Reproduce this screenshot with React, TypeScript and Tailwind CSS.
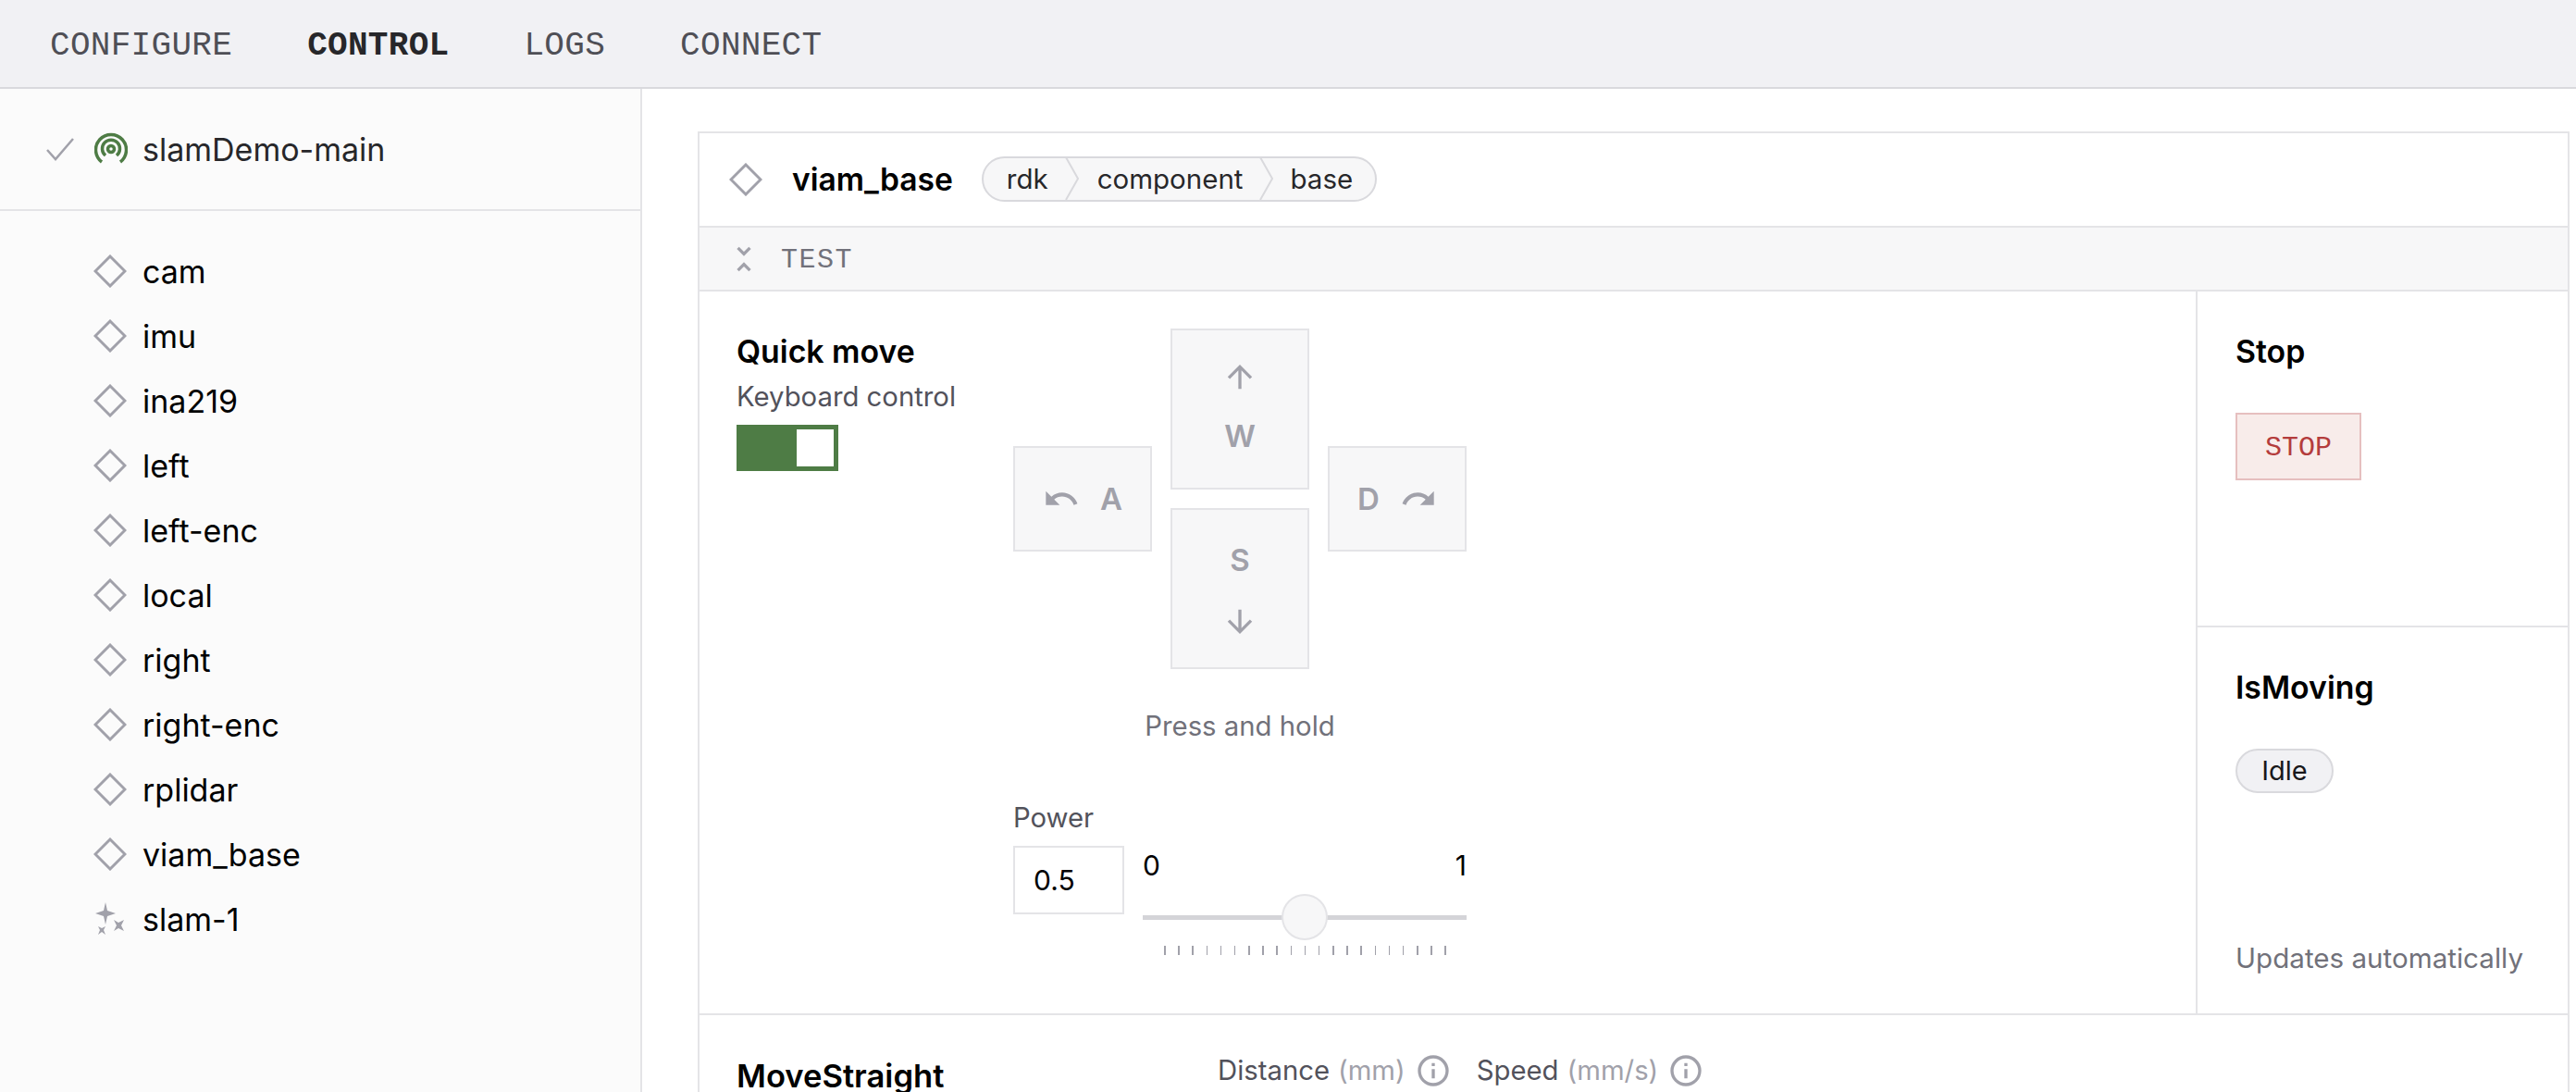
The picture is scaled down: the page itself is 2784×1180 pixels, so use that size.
const SANS = 'font-["Inter","Liberation_Sans",sans-serif]';

const machineParts = ['cam', 'imu', 'ina219', 'left', 'left-enc', 'local', 'right', 'right-enc', 'rplidar', 'viam_base'];

const Mdi = ({ d, size = 40, className = '' }: { d: string; size?: number; className?: string }) => (
  <svg width={size} height={size} viewBox="0 0 24 24" fill="currentColor" className={className}>
    <path d={d} />
  </svg>
);

const UNDO = 'M12.5,8C9.85,8 7.45,9 5.6,10.6L2,7V16H11L7.38,12.38C8.77,11.22 10.54,10.5 12.5,10.5C16.04,10.5 19.05,12.81 20.1,16L22.47,15.22C21.08,11.03 17.15,8 12.5,8Z';
const REDO = 'M18.4,10.6C16.55,9 14.15,8 11.5,8C6.85,8 2.92,11.03 1.54,15.22L3.9,16C4.95,12.81 7.95,10.5 11.5,10.5C13.45,10.5 15.23,11.22 16.62,12.38L13,16H22V7L18.4,10.6Z';
const ARROW_UP = 'M13,20H11V8L5.5,13.5L4.08,12.08L12,4.16L19.92,12.08L18.5,13.5L13,8V20Z';
const ARROW_DOWN = 'M11,4H13V16L18.5,10.5L19.92,11.92L12,19.84L4.08,11.92L5.5,10.5L11,16V4Z';
const UNFOLD_LESS = 'M16.59,5.41L15.17,4L12,7.17L8.83,4L7.41,5.41L12,10M7.41,18.59L8.83,20L12,16.83L15.17,20L16.59,18.59L12,14L7.41,18.59Z';
const INFO = 'M11,9H13V7H11M12,20C7.59,20 4,16.41 4,12C4,7.59 7.59,4 12,4C16.41,4 20,7.59 20,12C20,16.41 16.41,20 12,20M12,2A10,10 0 0,0 2,12A10,10 0 0,0 12,22A10,10 0 0,0 22,12A10,10 0 0,0 12,2M11,17H13V11H11V17Z';

const Diamond = () => (
  <svg width="36" height="36" viewBox="0 0 36 36" fill="none" stroke="#a1a1aa" strokeWidth="3" className="shrink-0">
    <path d="M18 2 L34 18 L18 34 L2 18 Z" />
  </svg>
);

const SlamIcon = () => (
  <svg width="36" height="36" viewBox="0 0 36 36" fill="#a1a1aa" className="shrink-0">
    <path d="M13 0 L15 9 L24 12 L15 15 L13 24 L11 15 L2 12 L11 9 Z" />
    <path d="M22 19 L27 22 L33 19 L30 25 L33 31 L27 28 L22 31 L25 25 Z" />
    <path d="M5 26 L9 28 L13 26 L11 30 L13 35 L9 32 L5 35 L7 30 Z" />
  </svg>
);

const LiveIcon = () => (
  <svg width="36" height="36" viewBox="0 0 36 36" fill="none" stroke="#4e7c45" strokeWidth="3.5" className="shrink-0">
    <path d="M8 32 A16.5 16.5 0 1 1 28 32" />
    <path d="M12 25 A9.5 9.5 0 1 1 24 25" />
    <circle cx="18" cy="18" r="3.5" />
  </svg>
);

const MoveKey = ({ className = '', children }: { className?: string; children: React.ReactNode }) => (
  <div className={`flex w-[150px] items-center justify-center border-2 border-[#e4e4e7] bg-[#f7f7f8] text-[#a1a1aa] ${className}`}>
    {children}
  </div>
);

const KeyLetter = ({ children }: { children: string }) => (
  <span className="text-[33px] leading-none font-semibold">{children}</span>
);

export default function App() {
  return (
    <div className={`flex h-[1180px] w-[2784px] flex-col overflow-hidden bg-white text-black ${SANS}`}>
      {/* tabs */}
      <nav className='flex h-[96px] shrink-0 items-center gap-[81px] border-b-2 border-[#d9d9dd] bg-[#f1f1f4] pt-[5px] pl-[54px] font-["Liberation_Mono",monospace] text-[36px] tracking-[0.3px] text-[#4f4f56]'>
        <span>CONFIGURE</span>
        <span className="font-bold text-[#27272a]">CONTROL</span>
        <span>LOGS</span>
        <span>CONNECT</span>
      </nav>

      <div className="flex min-h-0 flex-1">
        {/* sidebar */}
        <aside className="w-[694px] shrink-0 border-r-2 border-[#e4e4e7] bg-[#fbfbfb]">
          <div className="flex h-[132px] items-center border-b-2 border-[#e4e4e7] pl-[50px]">
            <svg width="30" height="26" viewBox="0 0 30 26" fill="none" stroke="#a1a1aa" strokeWidth="2.5">
              <path d="M1 14 L10 24 L29 2" />
            </svg>
            <span className="ml-[22px]"><LiveIcon /></span>
            <span className="ml-[16px] text-[34px] text-[#27272a]">slamDemo-main</span>
          </div>
          <ul className="flex flex-col pt-[30px]">
            {machineParts.map((name) => (
              <li key={name} className="flex h-[70px] items-center gap-[17px] pl-[101px] text-[34px]">
                <Diamond />
                {name}
              </li>
            ))}
            <li className="flex h-[70px] items-center gap-[17px] pl-[101px] text-[34px]">
              <SlamIcon />
              slam-1
            </li>
          </ul>
        </aside>

        {/* main */}
        <main className="min-w-0 flex-1 pt-[46px] pr-[7px] pl-[60px]">
          <div className="border-2 border-b-0 border-[#e4e4e7]">
            <div className="flex h-[100px] items-center pl-[32px]">
              <Diamond />
              <span className="ml-[32px] text-[33.6px] font-semibold">viam_base</span>
              <div className="mt-[-2px] ml-[31px] flex h-[49px] w-[427px] items-center rounded-full border-2 border-[#d9d9dd] bg-[#f7f7f8] text-[29.5px] text-[#27272a]">
                <span className="ml-[25px]">rdk</span>
                <svg width="16" height="46" viewBox="0 0 16 46" fill="none" stroke="#d9d9dd" strokeWidth="2" className="ml-[18px]">
                  <path d="M1 0 L14 23 L1 46" />
                </svg>
                <span className="ml-[19px]">component</span>
                <svg width="16" height="46" viewBox="0 0 16 46" fill="none" stroke="#d9d9dd" strokeWidth="2" className="ml-[18px]">
                  <path d="M1 0 L14 23 L1 46" />
                </svg>
                <span className="ml-[17px]">base</span>
              </div>
            </div>

            <div className='flex h-[71px] items-center border-y-2 border-[#e4e4e7] bg-[#f7f7f8] pl-[28px] font-["Liberation_Mono",monospace] text-[30px] tracking-[1.5px] text-[#71717a]'>
              <Mdi d={UNFOLD_LESS} size={40} className="text-[#a1a1aa]" />
              <span className="ml-[20px] pt-[3px]">TEST</span>
            </div>

            <div className="flex h-[782px] border-b-2 border-[#e4e4e7]">
              {/* quick move */}
              <div className="flex flex-1 pt-[40px] pl-[40px]">
                <div className="w-[299px] shrink-0">
                  <h3 className="text-[33.8px] leading-[50px] font-semibold">Quick move</h3>
                  <p className="mt-[2px] text-[29.3px] leading-[44px] text-[#52525b]">Keyboard control</p>
                  <div className="mt-[8px] flex h-[50px] w-[110px] items-center justify-end bg-[#4e7c45] pr-[5px]">
                    <div className="h-[40px] w-[40px] bg-white" />
                  </div>
                </div>

                <div className="w-[490px] shrink-0">
                  <div className="flex items-center gap-[20px]">
                    <MoveKey className="h-[114px] gap-[22px]">
                      <Mdi d={UNDO} />
                      <KeyLetter>A</KeyLetter>
                    </MoveKey>
                    <div className="flex flex-col gap-[20px]">
                      <MoveKey className="h-[174px] flex-col gap-[28px] pb-[10px]">
                        <Mdi d={ARROW_UP} />
                        <KeyLetter>W</KeyLetter>
                      </MoveKey>
                      <MoveKey className="h-[174px] flex-col gap-[30px] pt-[8px]">
                        <KeyLetter>S</KeyLetter>
                        <Mdi d={ARROW_DOWN} />
                      </MoveKey>
                    </div>
                    <MoveKey className="h-[114px] gap-[22px]">
                      <KeyLetter>D</KeyLetter>
                      <Mdi d={REDO} />
                    </MoveKey>
                  </div>

                  <p className="mt-[40px] text-center text-[29.3px] leading-[44px] text-[#71717a]">Press and hold</p>

                  <div className="mt-[55px] flex items-start gap-[20px]">
                    <div>
                      <label className="block text-[29.3px] leading-[44px] text-[#52525b]">Power</label>
                      <div className="mt-[8px] flex h-[74px] w-[120px] items-center border-2 border-[#e4e4e7] pl-[20px] text-[30px]">0.5</div>
                    </div>
                    <div className="w-[350px] pt-[51px]">
                      <div className="flex justify-between text-[30px] leading-[44px]">
                        <span>0</span>
                        <span>1</span>
                      </div>
                      <div className="relative mt-[32px] h-[5px] bg-[#d4d4d8]">
                        <div className="absolute top-[-23px] left-[150px] h-[50px] w-[50px] rounded-full border-2 border-[#e4e4e7] bg-[#f7f7f8]" />
                      </div>
                      <div className="mt-[28px] flex h-[10px] justify-between pr-[22px] pl-[23px]">
                        {Array.from({ length: 21 }, (_, i) => (
                          <span key={i} className="h-full w-[1.5px] bg-[#a1a1aa]" />
                        ))}
                      </div>
                    </div>
                  </div>
                </div>
              </div>

              {/* stop + is moving */}
              <div className="flex w-[402px] shrink-0 flex-col border-l-2 border-[#e4e4e7]">
                <div className="h-[363px] border-b-2 border-[#e4e4e7] pt-[40px] pl-[41px]">
                  <h3 className="text-[33.8px] leading-[50px] font-semibold">Stop</h3>
                  <div className='mt-[41px] flex h-[73px] w-[136px] items-center justify-center border-2 border-[#e6bfbf] bg-[#f8ecea] pt-[3px] font-["Liberation_Mono",monospace] text-[30px] text-[#b43c3c]'>
                    STOP
                  </div>
                </div>
                <div className="flex flex-1 flex-col pt-[40px] pl-[41px]">
                  <h3 className="text-[33.8px] leading-[50px] font-semibold">IsMoving</h3>
                  <div className="mt-[41px] flex h-[48px] w-[106px] items-center justify-center rounded-full border-2 border-[#d9d9dd] bg-[#f1f1f4] text-[29px] text-[#18181b]">
                    Idle
                  </div>
                  <p className="mt-[156px] text-[29.6px] leading-[44px] text-[#71717a]">Updates automatically</p>
                </div>
              </div>
            </div>

            {/* move straight */}
            <div className="flex items-start pt-[38px] pl-[40px]">
              <h3 className="mt-[2px] w-[520px] shrink-0 text-[34.6px] leading-[50px] font-semibold">MoveStraight</h3>
              <div className="flex items-center text-[29.3px] leading-[44px] text-[#52525b]">
                <span>Distance</span>
                <span className="ml-[9px] text-[#a1a1aa]">(mm)</span>
                <Mdi d={INFO} className="ml-[10px] text-[#a1a1aa]" />
                <span className="ml-[27px]">Speed</span>
                <span className="ml-[9px] text-[#a1a1aa]">(mm/s)</span>
                <Mdi d={INFO} className="ml-[10px] text-[#a1a1aa]" />
              </div>
            </div>
          </div>
        </main>
      </div>
    </div>
  );
}
